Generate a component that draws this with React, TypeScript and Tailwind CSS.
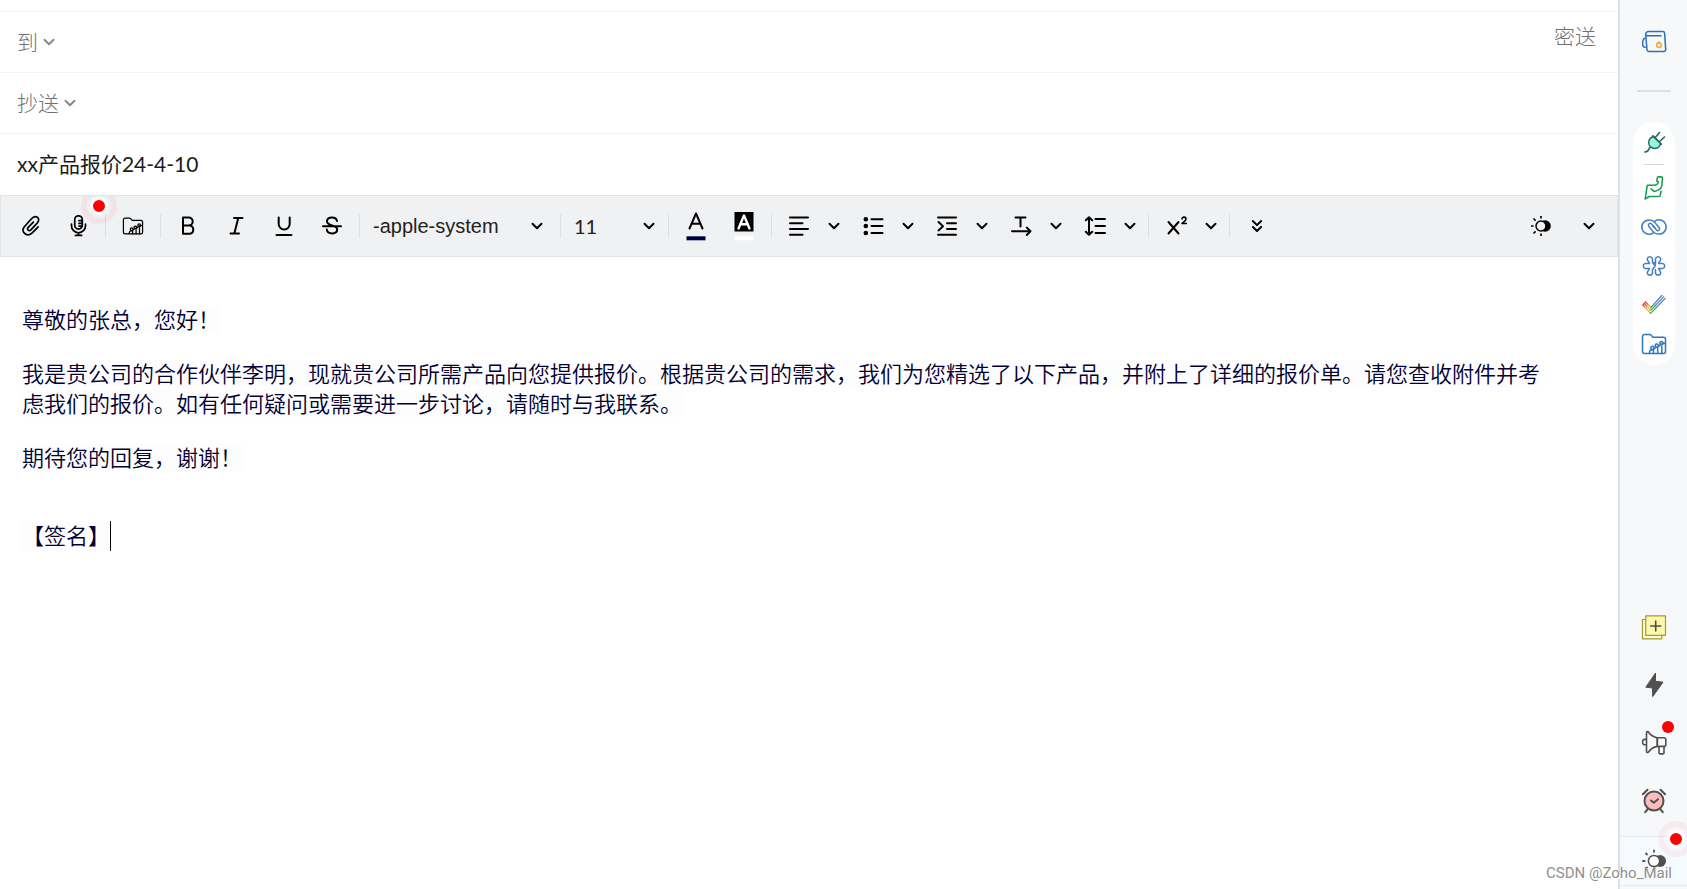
import type { ReactNode } from "react";
import { ChevronDown, ChevronsDown } from "lucide-react";

type IconProps = {
  children: ReactNode;
  color?: string;
  strokeWidth?: number;
  size?: number;
};

function Icon({ children, color = "currentColor", strokeWidth = 2, size = 24 }: IconProps) {
  return (
    <svg
      width={size}
      height={size}
      viewBox="0 0 24 24"
      fill="none"
      stroke={color}
      strokeWidth={strokeWidth}
      strokeLinecap="round"
      strokeLinejoin="round"
      overflow="visible"
      aria-hidden="true"
      className="shrink-0"
    >
      {children}
    </svg>
  );
}

function FolderShape() {
  return (
    <>
      <path d="M7 21.5H2.5a2 2 0 0 1-2-2v-15a2 2 0 0 1 2-2h5.2a2 2 0 0 1 1.5.7L11 5.2h10.5a2 2 0 0 1 2 2v12.3a2 2 0 0 1-2 2H7l1.2-3.2 2.6-.6 3-2.3 2.6-.8 3-2.5 3.4-.8" />
      <circle cx="10.4" cy="15.8" r="1.6" />
      <circle cx="14.8" cy="13.6" r="1.6" />
      <circle cx="19.4" cy="11" r="1.6" />
      <path d="M11.5 18.5v3M15.7 16.3v5.2M19.8 14v7.5" />
    </>
  );
}

function Divider() {
  return <span className="mx-[3px] h-6 w-px shrink-0 bg-[#dedfe1]" />;
}

function ToolButton({ label, children }: { label: string; children: ReactNode }) {
  return (
    <button type="button" aria-label={label} className="flex h-12 w-12 shrink-0 items-center justify-center">
      {children}
    </button>
  );
}

function MenuButton({ label, children }: { label: string; children: ReactNode }) {
  return (
    <div className="mr-1 flex shrink-0 items-center">
      <ToolButton label={label}>{children}</ToolButton>
      <button type="button" aria-label={`${label} 选项`} className="flex h-12 w-[22px] items-center justify-center">
        <ChevronDown size={18} strokeWidth={2.6} />
      </button>
    </div>
  );
}

function PulseDot() {
  return (
    <span className="flex h-9 w-9 items-center justify-center rounded-full border-[6px] border-red-500/5 bg-red-500/1">
      <span className="h-[18px] w-[18px] rounded-full border-[3px] border-white bg-[#ff0000]" />
    </span>
  );
}

function Toolbar() {
  return (
    <div
      role="toolbar"
      aria-label="格式"
      className="relative flex h-[62px] items-center overflow-hidden border border-[#e2e3e5] bg-[#f0f1f3] pb-px pl-[5px] text-black"
    >
      <ToolButton label="附件">
        <Icon strokeWidth={1.8} size={23}>
          <path d="m20 13.5-6.2 6.3C9.3 24.2 1.3 19.3 5.2 13.8L13 5c4.200-5 10.200-.6 6.200 4.200l-6.800 7.300c-2 2-4.800-.3-2.800-2.500l5.400-5.600" />
        </Icon>
      </ToolButton>
      <div className="relative">
        <ToolButton label="语音输入">
          <Icon strokeWidth={2} size={21}>
            <rect x="7.7" y="1" width="8.6" height="15" rx="4.2" />
            <path d="M4 10.500v1.800a8 8 0 0 0 16 0v-1.800M12 20.500v2.800M8.500 23.300h7M12.500 6.500h3.500M12.500 9.600h3.500M12.500 12.700h3.500" />
          </Icon>
        </ToolButton>
        <span className="absolute -top-[14px] left-[27px] z-10">
          <PulseDot />
        </span>
      </div>
      <Divider />
      <ToolButton label="文件夹">
        <Icon size={20} strokeWidth={1.5}>
          <FolderShape />
        </Icon>
      </ToolButton>
      <Divider />
      <ToolButton label="粗体">
        <Icon>
          <path d="M7 3.500h5.700a4 4 0 0 1 0 8H7zM7 11.500h6.700a4.200 4.200 0 0 1 0 8.300H7z" />
        </Icon>
      </ToolButton>
      <ToolButton label="斜体">
        <Icon>
          <path d="M10 4h8.500M6.500 19.500H15M14.300 4l-4 15.500" />
        </Icon>
      </ToolButton>
      <ToolButton label="下划线">
        <Icon>
          <path d="M6.700 3.500V10a5.500 5.500 0 0 0 11 0V3.500M4.500 21h15" />
        </Icon>
      </ToolButton>
      <ToolButton label="删除线">
        <Icon>
          <path d="M17 7c-.5-2.500-2.200-3.500-5-3.500-3.300 0-5 1.500-5 3.700 0 2.600 2.500 3.500 5 4.200 3 .8 5.200 1.700 5.200 4.200 0 2.400-2.200 3.800-5 3.800-3 0-5-1.300-5.400-3.800M3 12.200h18" />
        </Icon>
      </ToolButton>
      <Divider />
      <div className="relative w-[194px] shrink-0">
        <select
          aria-label="字体"
          className="h-12 w-full appearance-none bg-transparent pl-[10px] font-['Liberation_Sans',Arial,sans-serif] text-[20px] text-[#222]"
        >
          <option>-apple-system</option>
        </select>
        <ChevronDown size={18} strokeWidth={2.6} className="pointer-events-none absolute top-[15px] right-[11px]" />
      </div>
      <Divider />
      <div className="relative w-[101px] shrink-0">
        <select aria-label="字号" className="h-12 w-full appearance-none bg-transparent pl-[10px] text-[20px] text-[#222]">
          <option>11</option>
        </select>
        <ChevronDown size={18} strokeWidth={2.6} className="pointer-events-none absolute top-[15px] right-[7px]" />
      </div>
      <Divider />
      <ToolButton label="文字颜色">
        <Icon>
          <path d="m5.500 14.500 6.500-15 6.500 15M7.700 9.700h8.600" />
          <path d="M2.500 24.300h19" stroke="#00003c" strokeWidth={4} strokeLinecap="butt" />
        </Icon>
      </ToolButton>
      <ToolButton label="背景颜色">
        <Icon>
          <path d="M2.500-2h19v19.500h-19z" fill="#000" stroke="none" />
          <path d="m6.500 14.500 5.500-13 5.500 13M8.300 10.300h7.400" stroke="#fff" strokeWidth={2.4} />
          <path d="M2.500 24.300h19" stroke="#fff" strokeWidth={4} strokeLinecap="butt" />
        </Icon>
      </ToolButton>
      <Divider />
      <MenuButton label="对齐">
        <Icon>
          <path d="M3 3.500h18M3 9.300h12.500M3 15h18M3 20.700h12.500" />
        </Icon>
      </MenuButton>
      <MenuButton label="列表">
        <Icon>
          <path d="M10.500 5.200h11M10.500 12h11M10.500 19h11" />
          <path d="M4.800 5.200h.01M4.800 12h.01M4.800 19h.01" strokeWidth={4.6} />
        </Icon>
      </MenuButton>
      <MenuButton label="缩进">
        <Icon>
          <path d="M3 3.500h18M12 9.300h9M12 15h9M3 20.700h18M3.500 8l4.500 4.200-4.500 4.200" />
        </Icon>
      </MenuButton>
      <MenuButton label="文字方向">
        <Icon>
          <path d="M6.500 3.500h10M11.500 3.500v9M3 17.300h18.500M17.800 13.600l3.700 3.700-3.700 3.700" />
        </Icon>
      </MenuButton>
      <MenuButton label="行距">
        <Icon>
          <path d="M12.500 5H22M12.500 12H22M12.500 19H22M6 3.500v17M2.800 6.200 6 3.200l3.200 3M2.800 17.800l3.200 3 3.200-3" />
        </Icon>
      </MenuButton>
      <Divider />
      <MenuButton label="上标">
        <Icon>
          <path d="m4.500 8 10 11.500M14.500 8l-10 11.500" />
          <path d="M18 5c0-2.600 4-2.400 4 0 0 1.500-2 2.600-4 4.500h4.300" strokeWidth={1.6} />
        </Icon>
      </MenuButton>
      <Divider />
      <ToolButton label="更多">
        <ChevronsDown size={20} strokeWidth={2.4} />
      </ToolButton>
      <div className="mr-1 ml-auto flex">
        <ToolButton label="深色模式">
          <Icon size={20} color="#000">
            <circle cx="17" cy="12" r="6.8" fill="#000" stroke="none" />
            <circle cx="12" cy="12" r="6" fill="#f0f1f3" strokeWidth={1.8} />
            <path d="M12 0v3M12 21v3M0 12h3M3 3l2.500 2.500M3 21l2.500-2.500" strokeLinecap="butt" />
          </Icon>
        </ToolButton>
        <ToolButton label="展开">
          <ChevronDown size={18} strokeWidth={2.6} />
        </ToolButton>
      </div>
    </div>
  );
}

function RecipientRow({ id, label, action }: { id: string; label: string; action?: string }) {
  return (
    <div className="flex h-[61px] items-center border-b border-[#f3f3f4] pr-[22px] pl-[17px] text-[21px] font-light text-[#707070]">
      <label htmlFor={id}>{label}</label>
      <button type="button" aria-label={`${label} 选项`} className="ml-[2px]">
        <ChevronDown size={18} strokeWidth={2.6} className="text-[#888]" />
      </button>
      <input id={id} className="min-w-0 flex-1 px-2 outline-none" />
      {action && (
        <button type="button" className="mb-3">
          {action}
        </button>
      )}
    </div>
  );
}

const paragraphs = [
  "尊敬的张总，您好！",
  "我是贵公司的合作伙伴李明，现就贵公司所需产品向您提供报价。根据贵公司的需求，我们为您精选了以下产品，并附上了详细的报价单。请您查收附件并考虑我们的报价。如有任何疑问或需要进一步讨论，请随时与我联系。",
  "期待您的回复，谢谢！",
];

function SideButton({ label, children }: { label: string; children: ReactNode }) {
  return (
    <button type="button" aria-label={label} className="relative block h-6 w-6">
      {children}
    </button>
  );
}

function SideRail() {
  return (
    <aside className="relative flex w-[69px] shrink-0 flex-col items-center overflow-hidden border-l-2 border-[#dfe0e6] bg-[#f7f8fa] pt-[30px] pb-[3px]">
      <SideButton label="钱包">
        <Icon color="#2f6fb5" strokeWidth={1.5}>
          <path d="M19 5.800H5.500c-1.200 0-1.800-.6-1.800-1.700a2.700 2.700 0 0 1 2.800-2.600h14.300a1.800 1.800 0 0 1 1.800 1.700l1.100 16a2 2 0 0 1-2 2.300H7a2 2 0 0 1-2-1.800L3.700 4.500" />
          <path d="M3.200 8C1.500 8.500.6 11 .6 13.500c0 2.200.9 3.800 2.600 3.800" />
          <circle cx="17" cy="15.2" r="2.3" stroke="#f5b031" strokeWidth={1.7} />
          <path d="M17 11.800v1" stroke="#f5b031" />
        </Icon>
      </SideButton>
      <span className="mt-9 h-[2px] w-[34px] bg-[#dfe0e4]" />
      <div className="mt-[30px] flex w-[42px] flex-col items-center rounded-full bg-white pt-2 pb-[9px]">
        <SideButton label="插件">
          <Icon color="#23695f" strokeWidth={1.4}>
            <path d="M11.500 6.500 18.700 13.500c-1 3.200-3 5-6 5-3.200 0-6-2.500-6-6 0-3 2-5 4.800-6z" fill="#98f5e1" />
            <path d="m10.800 5.800 8.600 8.500M13.300 7.500l4.200-5M17.500 11.500l5-4.500M8.500 17.200c-3.200 1 .3 4.300-5.700 4.800" strokeWidth={1.6} />
          </Icon>
        </SideButton>
        <span className="mt-[10px] mb-[11px] h-px w-5 bg-[#d3d5db]" />
        <div className="flex flex-col gap-[15px]">
          <SideButton label="聊天">
            <Icon color="#1d9f56" strokeWidth={1.6}>
              <path d="M8.500 9.200H5.300L3.200 23l4-2.500h9.600a1.500 1.500 0 0 0 1.500-1.300l.7-4" />
              <path d="M8.500 9.200h3c2.800 0 4.500-.9 4.800-3.200L14.800 5l.5-3.200c.1-.6.5-.9 1-.9h3.200c.7 0 1.100.5 1 1.200l-.6 7.200c-.2 3.500-3.600 5.200-7.500 6.200L9 12.800" />
            </Icon>
          </SideButton>
          <SideButton label="链接">
            <Icon color="#417fbe" strokeWidth={1.5}>
              <path d="M12 17.300A7.200 7.200 0 1 1 7.500 4.900c2.500 0 4 .9 5.300 2.500l4.400 5.300c1.400 1.900-1.100 4-2.700 2.300L11 11" />
              <path d="M12 6.700a7.200 7.200 0 1 1 4.500 12.400c-2.500 0-4-.9-5.300-2.500l-4.400-5.300c-1.400-1.900 1.100-4 2.700-2.300L13 13" />
            </Icon>
          </SideButton>
          <SideButton label="协作">
            <Icon color="#417fbe" strokeWidth={1.5}>
              <path d="M10.500 8.500V4.700a2.700 2.700 0 0 0-5.200 0c-.1.800.1 1.400.5 2l1.700 2.700H3.300a2.700 2.700 0 0 0 0 5.200h4.200l-1.700 2.700c-.4.600-.6 1.200-.5 2a2.700 2.700 0 0 0 5.200 0v-3.800l2.700-3.500z" />
              <path d="m12 8.500 1.500 1.800V4.700a2.700 2.700 0 0 1 5.200 0c.1.800-.1 1.400-.5 2l-1.700 2.700h4.200a2.700 2.700 0 0 1 0 5.200h-4.200l1.700 2.700c.4.600.6 1.200.5 2a2.700 2.700 0 0 1-5.200 0v-3.800" />
            </Icon>
          </SideButton>
          <SideButton label="任务">
            <Icon strokeWidth={1.2}>
              <path d="m.8 12 2.700-3M.8 12l2.700 2.700M2.200 10.500l2.500 2.700M3.500 9 6 11.700" stroke="#e4483f" />
              <path d="m3.500 14.700 5 5.600M4.700 13.200l4 4.200M6 11.700l3 2.800" stroke="#f4a634" />
              <path d="m8.500 20.300 5-5M8.700 17.400l4.300-4.600M9 14.500l3.200-3.700" stroke="#35a853" />
              <path d="m13.500 15.300 9.700-10M13 12.800l8.700-9M12.200 10.800l7.600-8.300" stroke="#417fbe" />
            </Icon>
          </SideButton>
          <SideButton label="资料夹">
            <Icon color="#2e78bd" strokeWidth={1.5}>
              <FolderShape />
            </Icon>
          </SideButton>
        </div>
      </div>
      <div className="mt-auto flex flex-col gap-[34px]">
        <SideButton label="新建便笺">
          <Icon color="#a59b2c" strokeWidth={1.2}>
            <path d="M.5 4.500h19.300v19.300H.5z" fill="#fffbe0" />
            <path d="M3.700.8h19.800v19.500H3.700z" fill="#fff8ab" />
            <path d="M13.700 6v10M8.700 11h10" stroke="#4c4c4c" strokeWidth={1.6} />
          </Icon>
        </SideButton>
        <SideButton label="快捷操作">
          <Icon color="#505050" strokeWidth={1}>
            <path d="M13.300.3 3.800 14.200l6.700.8.200 8.600L21 9.200l-7.200-.9z" fill="#505050" />
          </Icon>
        </SideButton>
        <SideButton label="公告">
          <Icon color="#505050" strokeWidth={1.6}>
            <path d="M4.500 1.800c0-1.500 1.600-1.500 2.300-.3 2 3 4.900 4.500 8.500 5.300v8.600c-3.600.8-6.500 2.300-8.500 5.300-.7 1.200-2.300 1.200-2.300-.3zM4.300 8.600C1.500 7.800.6 9 .6 11s.9 3.300 3.700 2.600" />
            <path d="M15.300 6.800h6.500a2 2 0 0 1 2 2v4.600a2 2 0 0 1-2 2h-6.500zM17 15.500v6.200c0 1.600 5 1.600 5 0v-6.300" />
          </Icon>
          <span className="absolute -top-[10px] -right-2 h-3 w-3 rounded-full bg-[#ff0000]" />
        </SideButton>
        <SideButton label="提醒">
          <Icon color="#505050">
            <circle cx="12" cy="12" r="9.5" fill="#ffbcbc" />
            <path d="m9 11.500 2.800 2.300 4.200-3.600M5.500 20.500l-2.300 2.700M18.500 20.500l2.300 2.700M.9 5.200 5.500.8M23.100 5.200 18.500.8" />
          </Icon>
        </SideButton>
      </div>
      <div className="relative mt-[23px] flex h-[50px] w-full items-center justify-center border-y border-[#e6ecf2] bg-[#f5fafe]">
        <SideButton label="外观">
          <Icon color="#505050" strokeWidth={1.5}>
            <circle cx="18" cy="12" r="6" fill="#505050" stroke="none" />
            <circle cx="12" cy="12" r="5.6" fill="#fff" />
            <path d="M12 .8v2.600M12 20.600v2.600M.3 12h3M3.500 4l2 2M3.500 20l2-2" strokeLinecap="butt" strokeWidth={1.8} />
          </Icon>
        </SideButton>
        <span className="absolute -top-4 -right-[7px]">
          <PulseDot />
        </span>
      </div>
    </aside>
  );
}

export default function App() {
  return (
    <div className="relative flex min-h-screen overflow-hidden bg-white font-['Lato','Noto_Sans_CJK_SC',sans-serif]">
      <main className="flex min-w-0 flex-1 flex-col">
        <div className="h-3 border-b border-[#f3f3f4]" />
        <RecipientRow id="to" label="到" action="密送" />
        <RecipientRow id="cc" label="抄送" />
        <input
          aria-label="主题"
          defaultValue="xx产品报价24-4-10"
          className="h-[61px] w-full px-[17px] pb-1 text-[21px] text-[#1c1c1c] outline-none"
        />
        <Toolbar />
        <article className="flex-1 space-y-6 pt-12 pr-16 pl-[22px] text-[22px] leading-[30px] font-[350] text-[#000032]">
          {paragraphs.map((text) => (
            <p key={text}>
              <span className="bg-[#fdfdfe]">{text}</span>
            </p>
          ))}
          <p className="flex pt-6">
            <span className="bg-[#fdfdfe]">【签名】</span>
            <span className="h-[30px] w-px bg-black" />
          </p>
        </article>
      </main>
      <SideRail />
      <span className="pointer-events-none absolute right-[15px] bottom-[5px] font-[Roboto,'Liberation_Sans',sans-serif] text-[15px] text-[#909090] [text-shadow:1px_1px_0_#fff]">
        CSDN @Zoho_Mail
      </span>
    </div>
  );
}
